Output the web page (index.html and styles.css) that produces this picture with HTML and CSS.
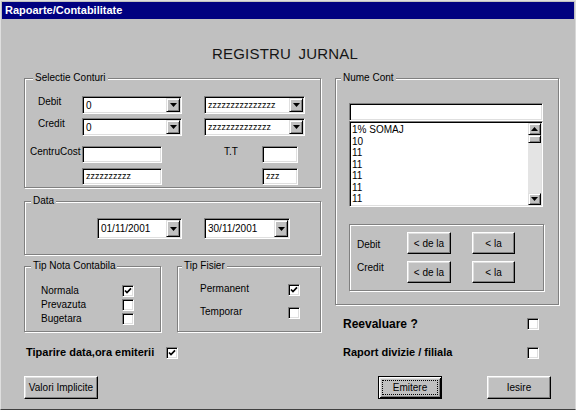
FILE: index.html
```html
<!DOCTYPE html>
<html>
<head>
<meta charset="utf-8">
<link rel="stylesheet" href="styles.css">
</head>
<body>
<div class="window">
  <div class="titlebar">Rapoarte/Contabilitate</div>
  <div class="client">
    <div class="heading">REGISTRU JURNAL</div>
    <div class="main">
      <div class="col-left">
        <div class="group g-sel">
          <span class="legend">Selectie Conturi</span>
          <div class="row">
            <span class="lbl lbl-a">Debit</span>
            <div class="combo c-acc"><span class="val">0</span><span class="drop"><svg width="7" height="4" viewBox="0 0 7 4"><path d="M0 0h7L3.5 4z"/></svg></span></div>
            <div class="combo c-accz"><span class="val small">zzzzzzzzzzzzzzz</span><span class="drop"><svg width="7" height="4" viewBox="0 0 7 4"><path d="M0 0h7L3.5 4z"/></svg></span></div>
          </div>
          <div class="row r2">
            <span class="lbl lbl-a">Credit</span>
            <div class="combo c-acc"><span class="val">0</span><span class="drop"><svg width="7" height="4" viewBox="0 0 7 4"><path d="M0 0h7L3.5 4z"/></svg></span></div>
            <div class="combo c-accz"><span class="val small">zzzzzzzzzzzzzz</span><span class="drop"><svg width="7" height="4" viewBox="0 0 7 4"><path d="M0 0h7L3.5 4z"/></svg></span></div>
          </div>
          <div class="row r3">
            <span class="lbl lbl-c">CentruCost</span>
            <div class="field f-cc"></div>
            <span class="lbl lbl-tt">T.T</span>
            <div class="field f-tt"></div>
          </div>
          <div class="row r4">
            <div class="field f-cc f-cc2 small">zzzzzzzzzz</div>
            <div class="field f-tt f-tt2 small">zzz</div>
          </div>
        </div>

        <div class="group g-data">
          <span class="legend lg-data">Data</span>
          <div class="combo c-date"><span class="val">01/11/2001</span><span class="drop"><svg width="7" height="4" viewBox="0 0 7 4"><path d="M0 0h7L3.5 4z"/></svg></span></div>
          <div class="combo c-date c-date2"><span class="val">30/11/2001</span><span class="drop"><svg width="7" height="4" viewBox="0 0 7 4"><path d="M0 0h7L3.5 4z"/></svg></span></div>
        </div>

        <div class="tips">
          <div class="group g-nota">
            <span class="legend lg-data">Tip Nota Contabila</span>
            <div class="crow">
              <span class="clbl">Normala</span>
              <span class="chk"><svg width="8" height="8" viewBox="0 0 8 8"><polyline points="1,3.5 3,5.6 7,1.4" fill="none" stroke="#000" stroke-width="1.7"/></svg></span>
            </div>
            <div class="crow">
              <span class="clbl">Prevazuta</span>
              <span class="chk"></span>
            </div>
            <div class="crow">
              <span class="clbl">Bugetara</span>
              <span class="chk"></span>
            </div>
          </div>
          <div class="group g-fis">
            <span class="legend lg-fis">Tip Fisier</span>
            <div class="frow">
              <span class="flbl">Permanent</span>
              <span class="chk"><svg width="8" height="8" viewBox="0 0 8 8"><polyline points="1,3.5 3,5.6 7,1.4" fill="none" stroke="#000" stroke-width="1.7"/></svg></span>
            </div>
            <div class="frow frow2">
              <span class="flbl">Temporar</span>
              <span class="chk"></span>
            </div>
          </div>
        </div>

        <div class="opt-row opt-tip">
          <span class="olbl olbl-tip">Tiparire data,ora emiterii</span>
          <span class="chk"><svg width="8" height="8" viewBox="0 0 8 8"><polyline points="1,3.5 3,5.6 7,1.4" fill="none" stroke="#000" stroke-width="1.7"/></svg></span>
        </div>
      </div>

      <div class="col-right">
        <div class="group g-nume">
          <span class="legend lg-nume">Nume Cont</span>
          <div class="field f-nume"></div>
          <div class="list">
            <div class="items">
              <div>1% SOMAJ</div>
              <div>10</div>
              <div>11</div>
              <div>11</div>
              <div>11</div>
              <div>11</div>
              <div>11</div>
            </div>
            <div class="sb">
              <span class="sb-btn"><svg width="7" height="4" viewBox="0 0 7 4"><path d="M0 4h7L3.5 0z"/></svg></span>
              <span class="sb-thumb"></span>
              <span class="sb-track"></span>
              <span class="sb-btn"><svg width="7" height="4" viewBox="0 0 7 4"><path d="M0 0h7L3.5 4z"/></svg></span>
            </div>
          </div>
          <div class="group g-inner">
            <div class="brow">
              <span class="blbl">Debit</span>
              <span class="btn b-dela">&lt; de la</span>
              <span class="btn b-la">&lt; la</span>
            </div>
            <div class="brow brow2">
              <span class="blbl blbl2">Credit</span>
              <span class="btn b-dela">&lt; de la</span>
              <span class="btn b-la">&lt; la</span>
            </div>
          </div>
        </div>

        <div class="opt-row opt-reev">
          <span class="olbl olbl-reev">Reevaluare ?</span>
          <span class="chk"></span>
        </div>
        <div class="opt-row opt-rap">
          <span class="olbl olbl-rap">Raport divizie / filiala</span>
          <span class="chk"></span>
        </div>
      </div>
    </div>

    <div class="buttons">
      <span class="btn b-val">Valori Implicite</span>
      <span class="btn btn-default b-emit"><span class="focus">Emitere</span></span>
      <span class="btn b-ies">Iesire</span>
    </div>
  </div>
</div>
</body>
</html>
```

FILE: styles.css
```css
* { box-sizing: border-box; }
body {
  margin: 0;
  background: #c0c0c0;
  font-family: "Liberation Sans", Arial, sans-serif;
  font-size: 10px;
  color: #000;
}
.window {
  width: 576px;
  height: 410px;
  border: 1px solid;
  border-color: #dfdfdf #d8d8d8 #404040 #dfdfdf;
  padding: 1px;
  background: #c0c0c0;
  display: flex;
  flex-direction: column;
}
.titlebar {
  height: 17px;
  background: #000080;
  color: #fff;
  font-weight: bold;
  font-size: 11px;
  line-height: 17px;
  padding-left: 3px;
}
.client {
  flex: 1;
  padding-left: 22px;
}
.heading {
  margin-top: 26px;
  margin-left: 188px;
  font-size: 15px;
  line-height: 18px;
  color: #151515;
  letter-spacing: 0.2px;
  word-spacing: 3px;
}
.main {
  display: flex;
  gap: 14px;
  margin-top: 15px;
}
.col-left { width: 297px; display: flex; flex-direction: column; }
.col-right { width: 224px; display: flex; flex-direction: column; }

.group {
  position: relative;
  border: 1px solid #808080;
  box-shadow: inset 1px 1px 0 #fff, 1px 1px 0 #fff;
}
.legend {
  position: absolute;
  top: -7px;
  left: 8px;
  padding: 0 2px;
  background: #c0c0c0;
  line-height: 12px;
  white-space: nowrap;
}
.lg-data { left: 6px; }
.lg-fis { left: 4px; }
.lg-nume { left: 5px; }

/* sunken fields */
.combo, .field, .list, .chk {
  background: #fff;
  border: 1px solid;
  border-color: #808080 #fff #fff #808080;
  box-shadow: inset 1px 1px 0 #000, inset -1px -1px 0 #dfdfdf;
}
.combo {
  display: flex;
  align-items: center;
  padding: 1px;
}
.combo .val {
  flex: 1;
  padding-left: 2px;
  white-space: nowrap;
  overflow: hidden;
}
.small { font-size: 9px; }
.drop, .sb-btn, .sb-thumb {
  background: #c0c0c0;
  border: 1px solid;
  border-color: #dfdfdf #000 #000 #dfdfdf;
  box-shadow: inset 1px 1px 0 #fff, inset -1px -1px 0 #808080;
  display: flex;
  align-items: center;
  justify-content: center;
}
.drop { width: 14px; align-self: stretch; }
.drop svg, .sb-btn svg { display: block; }

.field {
  padding-left: 3px;
  line-height: 15px;
  white-space: nowrap;
}

/* Selectie Conturi */
.g-sel { height: 110px; padding-top: 17px; }
.row { display: flex; align-items: flex-start; }
.r2 { margin-top: 4px; }
.r3 { margin-top: 10px; }
.r4 { margin-top: 5px; }
.lbl { line-height: 12px; white-space: nowrap; }
.lbl-a { width: 57px; padding-left: 13px; }
.lbl-c { width: 57px; padding-left: 5px; }
.lbl-tt { width: 38px; margin-left: 62px; }
.c-acc { width: 100px; height: 18px; }
.c-accz { width: 101px; height: 18px; margin-left: 22px; }
.f-cc { width: 80px; height: 17px; }
.f-tt { width: 36px; height: 17px; }
.f-cc2 { margin-left: 57px; }
.f-tt2 { margin-left: 100px; }

/* Data */
.g-data {
  margin-top: 13px;
  height: 54px;
  padding: 16px 0 0 72px;
  display: flex;
  align-items: flex-start;
  gap: 22px;
}
.c-date { width: 85px; height: 21px; }
.c-date2 { width: 86px; }

/* Tip groups */
.tips { display: flex; gap: 16px; margin-top: 11px; }
.g-nota { width: 137px; height: 66px; padding-top: 18px; }
.g-fis { width: 144px; height: 66px; padding-top: 16px; }
.crow { display: flex; align-items: flex-start; height: 14px; }
.clbl { width: 97px; padding-left: 16px; line-height: 12px; }
.frow { display: flex; align-items: flex-start; height: 13px; }
.frow2 { margin-top: 10px; }
.flbl { width: 110px; padding-left: 22px; line-height: 12px; }
.frow .chk { margin-top: 1px; }

.chk {
  width: 12px;
  height: 12px;
  display: flex;
  align-items: center;
  justify-content: center;
  flex: none;
}
.chk svg { display: block; }

/* option rows */
.opt-row { display: flex; align-items: flex-start; }
.opt-row .chk { margin-top: 1px; }
.olbl { font-weight: bold; white-space: nowrap; }
.opt-tip { margin-top: 14px; }
.olbl-tip { width: 142px; padding-left: 2px; font-size: 11px; line-height: 13px; }
.opt-reev { margin-top: 12px; }
.olbl-reev { width: 192px; padding-left: 8px; font-size: 12px; line-height: 14px; }
.opt-rap { margin-top: 15px; }
.olbl-rap { width: 192px; padding-left: 8px; font-size: 11px; line-height: 13px; }

/* Nume Cont */
.g-nume { height: 227px; padding: 24px 0 0 13px; }
.f-nume { width: 194px; height: 18px; }
.list {
  width: 194px;
  height: 86px;
  padding: 1px;
  display: flex;
}
.items {
  flex: 1;
  padding: 1px 0 0 1px;
  line-height: 11.5px;
  overflow: hidden;
}
.sb {
  width: 13px;
  display: flex;
  flex-direction: column;
  background: #e4e4e4;
}
.sb-btn { height: 12px; }
.sb-thumb { height: 8px; }
.sb-track { flex: 1; }

.g-inner {
  margin-top: 17px;
  width: 195px;
  height: 67px;
  padding-top: 7px;
}
.brow { display: flex; align-items: flex-start; }
.brow2 { margin-top: 7px; }
.blbl { width: 57px; padding-left: 7px; line-height: 12px; margin-top: 7px; }
.blbl2 { margin-top: 1px; }

/* buttons */
.btn {
  display: flex;
  align-items: center;
  justify-content: center;
  background: #c0c0c0;
  border: 1px solid;
  border-color: #fff #000 #000 #fff;
  box-shadow: inset -1px -1px 0 #808080, inset 1px 1px 0 #dfdfdf;
  white-space: nowrap;
}
.b-dela { width: 44px; height: 22px; }
.b-la { width: 43px; height: 22px; margin-left: 21px; }

.buttons { display: flex; margin-top: 17px; }
.b-val { width: 74px; height: 23px; }
.b-emit { width: 64px; height: 23px; margin-left: 280px; }
.b-ies { width: 64px; height: 23px; margin-left: 45px; }
.btn-default {
  border: 1px solid #000;
  box-shadow: inset 1px 1px 0 #fff, inset -1px -1px 0 #000, inset 2px 2px 0 #dfdfdf, inset -2px -2px 0 #808080;
}
.focus {
  flex: 1;
  align-self: stretch;
  margin: 3px;
  border: 1px dotted #000;
  display: flex;
  align-items: center;
  justify-content: center;
}
```
